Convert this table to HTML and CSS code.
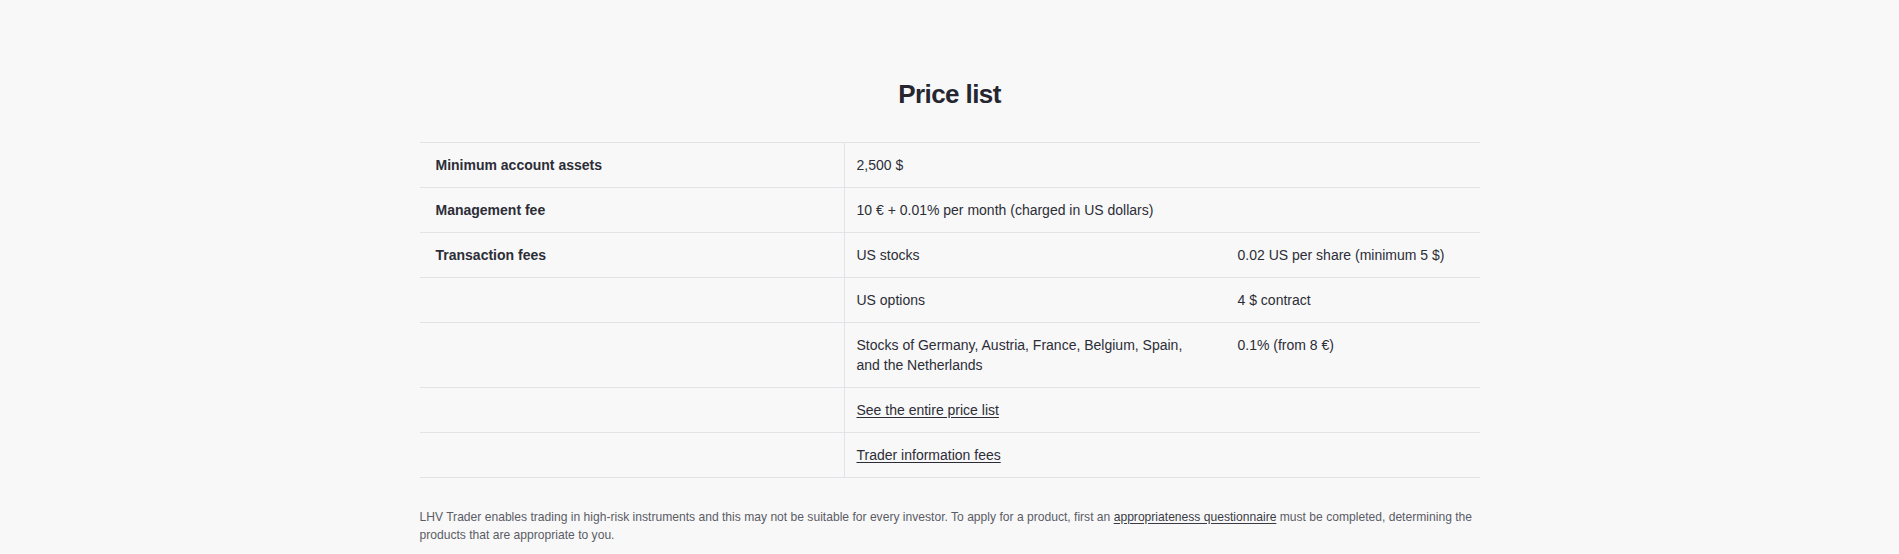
FILE: index.html
```html
<!DOCTYPE html>
<html lang="en">
<head>
<meta charset="utf-8">
<title>Price list</title>
<link rel="stylesheet" href="styles.css">
</head>
<body>
<main class="page">
  <h1 class="title">Price list</h1>
  <div class="table">
    <div class="row">
      <div class="label">Minimum account assets</div>
      <div class="values">
        <div class="value wide">2,500 $</div>
      </div>
    </div>
    <div class="row">
      <div class="label">Management fee</div>
      <div class="values">
        <div class="value wide">10 € + 0.01% per month (charged in US dollars)</div>
      </div>
    </div>
    <div class="row">
      <div class="label">Transaction fees</div>
      <div class="values">
        <div class="value">US stocks</div>
        <div class="value">0.02 US per share (minimum 5 $)</div>
      </div>
    </div>
    <div class="row">
      <div class="label"></div>
      <div class="values">
        <div class="value">US options</div>
        <div class="value">4 $ contract</div>
      </div>
    </div>
    <div class="row">
      <div class="label"></div>
      <div class="values">
        <div class="value">Stocks of Germany, Austria, France, Belgium, Spain, and the Netherlands</div>
        <div class="value">0.1% (from 8 €)</div>
      </div>
    </div>
    <div class="row">
      <div class="label"></div>
      <div class="values">
        <div class="value wide"><a class="link" href="#">See the entire price list</a></div>
      </div>
    </div>
    <div class="row">
      <div class="label"></div>
      <div class="values">
        <div class="value wide"><a class="link" href="#">Trader information fees</a></div>
      </div>
    </div>
  </div>
  <p class="note">LHV Trader enables trading in high-risk instruments and this may not be suitable for every investor. To apply for a product, first an <a class="link" href="#">appropriateness questionnaire</a> must be completed, determining the products that are appropriate to you.</p>
</main>
</body>
</html>
```
FILE: styles.css
```css
html, body {
  margin: 0;
  padding: 0;
  background: #f8f8f8;
}

body {
  font-family: "Liberation Sans", Arial, Helvetica, sans-serif;
  color: #2c2d37;
}

.page {
  width: 1060px;
  margin: 0 auto;
  padding-top: 78px;
}

.title {
  margin: 0 0 32px;
  font-size: 26px;
  line-height: 32px;
  font-weight: 700;
  letter-spacing: -0.6px;
  text-align: center;
  color: #262630;
}

.table {
  border-top: 1px solid #e2e2e7;
}

.row {
  display: grid;
  grid-template-columns: 2fr 3fr;
  border-bottom: 1px solid #e2e2e7;
}

.label {
  padding: 12px 16px;
  font-size: 14px;
  line-height: 20px;
  font-weight: 700;
}

.values {
  display: grid;
  grid-template-columns: 3fr 2fr;
  border-left: 1px solid #e2e2e7;
}

.value {
  padding: 12px 28px 12px 12px;
  font-size: 14px;
  line-height: 20px;
}

.value.wide {
  grid-column: 1 / -1;
}

.link {
  color: inherit;
  text-decoration: underline;
  text-underline-offset: 2px;
}

.note {
  margin: 30px 0 0;
  font-size: 12.1px;
  line-height: 18px;
  color: #5b5c66;
}

.note .link {
  color: #3a3b45;
}
```
